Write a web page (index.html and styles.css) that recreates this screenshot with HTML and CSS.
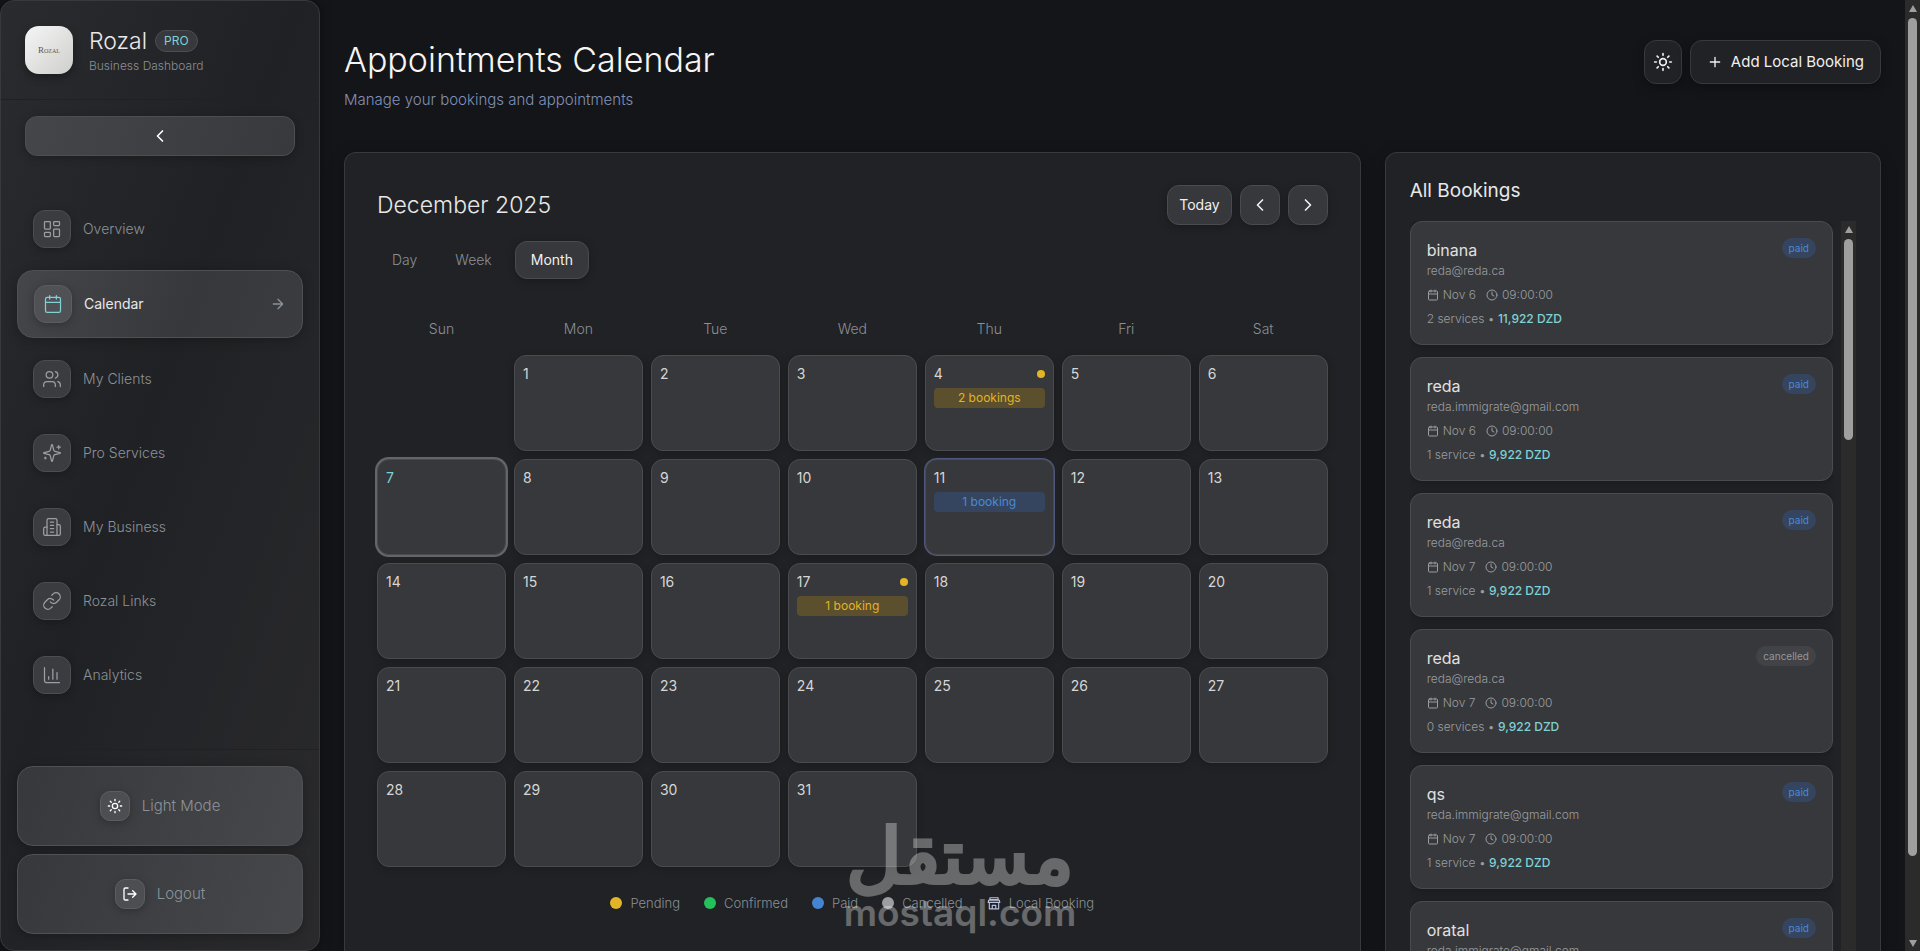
FILE: index.html
```html
<!DOCTYPE html>
<html lang="en">
<head>
  <meta charset="UTF-8">
  <title>Appointments Calendar - Rozal</title>
  <link rel="stylesheet" href="styles.css">
</head>
<body>
  <!-- Icons -->
  <svg class="sprite" aria-hidden="true">
    <symbol id="i-dashboard" viewBox="0 0 24 24"><rect x="3" y="3" width="7" height="9" rx="1"/><rect x="14" y="3" width="7" height="5" rx="1"/><rect x="14" y="12" width="7" height="9" rx="1"/><rect x="3" y="16" width="7" height="5" rx="1"/></symbol>
    <symbol id="i-calendar" viewBox="0 0 24 24"><path d="M8 2v4M16 2v4M3 10h18"/><rect x="3" y="4" width="18" height="18" rx="2"/></symbol>
    <symbol id="i-users" viewBox="0 0 24 24"><path d="M16 21v-2a4 4 0 0 0-4-4H6a4 4 0 0 0-4 4v2"/><circle cx="9" cy="7" r="4"/><path d="M22 21v-2a4 4 0 0 0-3-3.87M16 3.13a4 4 0 0 1 0 7.75"/></symbol>
    <symbol id="i-sparkles" viewBox="0 0 24 24"><path d="M9.94 15.5A2 2 0 0 0 8.5 14.06l-6.14-1.58a.5.5 0 0 1 0-.96L8.5 9.94A2 2 0 0 0 9.94 8.5l1.58-6.14a.5.5 0 0 1 .96 0l1.58 6.14a2 2 0 0 0 1.44 1.44l6.14 1.58a.5.5 0 0 1 0 .96l-6.14 1.58a2 2 0 0 0-1.44 1.44l-1.58 6.14a.5.5 0 0 1-.96 0z"/><path d="M20 3v4M22 5h-4M4 17v2M5 18H3"/></symbol>
    <symbol id="i-building" viewBox="0 0 24 24"><path d="M6 22V4a2 2 0 0 1 2-2h8a2 2 0 0 1 2 2v18Z"/><path d="M6 12H4a2 2 0 0 0-2 2v6a2 2 0 0 0 2 2h2M18 9h2a2 2 0 0 1 2 2v9a2 2 0 0 1-2 2h-2M10 6h4M10 10h4M10 14h4M10 18h4"/></symbol>
    <symbol id="i-link" viewBox="0 0 24 24"><path d="M10 13a5 5 0 0 0 7.54.54l3-3a5 5 0 0 0-7.07-7.07l-1.72 1.71"/><path d="M14 11a5 5 0 0 0-7.54-.54l-3 3a5 5 0 0 0 7.07 7.07l1.71-1.71"/></symbol>
    <symbol id="i-chart" viewBox="0 0 24 24"><path d="M3 3v16a2 2 0 0 0 2 2h16M18 17V9M13 17V5M8 17v-3"/></symbol>
    <symbol id="i-sun" viewBox="0 0 24 24"><circle cx="12" cy="12" r="4"/><path d="M12 2v2M12 20v2M4.93 4.93l1.41 1.41M17.66 17.66l1.41 1.41M2 12h2M20 12h2M6.34 17.66l-1.41 1.41M19.07 4.93l-1.41 1.41"/></symbol>
    <symbol id="i-logout" viewBox="0 0 24 24"><path d="M9 21H5a2 2 0 0 1-2-2V5a2 2 0 0 1 2-2h4M16 17l5-5-5-5M21 12H9"/></symbol>
    <symbol id="i-left" viewBox="0 0 24 24"><path d="m15 18-6-6 6-6"/></symbol>
    <symbol id="i-right" viewBox="0 0 24 24"><path d="m9 18 6-6-6-6"/></symbol>
    <symbol id="i-arrow" viewBox="0 0 24 24"><path d="M5 12h14M12 5l7 7-7 7"/></symbol>
    <symbol id="i-plus" viewBox="0 0 24 24"><path d="M5 12h14M12 5v14"/></symbol>
    <symbol id="i-clock" viewBox="0 0 24 24"><circle cx="12" cy="12" r="10"/><path d="M12 6v6l4 2"/></symbol>
    <symbol id="i-store" viewBox="0 0 24 24"><path d="M5 3h14v3H5z"/><path d="M3 7h18l1 4H2zM4 12v10h16V12M9 22v-6h6v6"/></symbol>
  </svg>

  <div class="app">
    <aside class="sidebar">
      <div class="brand">
        <div class="brand-logo">Rozal</div>
        <div>
          <div class="brand-name">Rozal <span class="pro">PRO</span></div>
          <div class="brand-sub">Business Dashboard</div>
        </div>
      </div>
      <div class="collapse">
        <button type="button" class="collapse-btn" aria-label="Collapse sidebar"><svg class="icon icon-lg"><use href="#i-left"/></svg></button>
      </div>
      <nav class="nav">
        <a href="#" class="nav-item"><span class="nav-icon"><svg class="icon"><use href="#i-dashboard"/></svg></span>Overview</a>
        <a href="#" class="nav-item active"><span class="nav-icon"><svg class="icon"><use href="#i-calendar"/></svg></span>Calendar<svg class="icon nav-arrow"><use href="#i-arrow"/></svg></a>
        <a href="#" class="nav-item"><span class="nav-icon"><svg class="icon"><use href="#i-users"/></svg></span>My Clients</a>
        <a href="#" class="nav-item"><span class="nav-icon"><svg class="icon"><use href="#i-sparkles"/></svg></span>Pro Services</a>
        <a href="#" class="nav-item"><span class="nav-icon"><svg class="icon"><use href="#i-building"/></svg></span>My Business</a>
        <a href="#" class="nav-item"><span class="nav-icon"><svg class="icon"><use href="#i-link"/></svg></span>Rozal Links</a>
        <a href="#" class="nav-item"><span class="nav-icon"><svg class="icon"><use href="#i-chart"/></svg></span>Analytics</a>
      </nav>
      <div class="sidebar-footer">
        <button type="button" class="footer-btn"><span class="footer-icon"><svg class="icon"><use href="#i-sun"/></svg></span>Light Mode</button>
        <button type="button" class="footer-btn"><span class="footer-icon"><svg class="icon"><use href="#i-logout"/></svg></span>Logout</button>
      </div>
    </aside>

    <main class="main">
      <header class="page-header">
        <div>
          <h1>Appointments Calendar</h1>
          <p class="subtitle">Manage your bookings and appointments</p>
        </div>
        <div class="header-actions">
          <button type="button" class="header-btn theme-btn" aria-label="Toggle theme"><svg class="icon icon-lg"><use href="#i-sun"/></svg></button>
          <button type="button" class="header-btn"><svg class="icon"><use href="#i-plus"/></svg>Add Local Booking</button>
        </div>
      </header>

      <div class="content">
        <section class="card calendar">
          <div class="calendar-top">
            <h2>December 2025</h2>
            <div class="calendar-nav">
              <button type="button" class="btn">Today</button>
              <button type="button" class="btn btn-square" aria-label="Previous month"><svg class="icon icon-lg"><use href="#i-left"/></svg></button>
              <button type="button" class="btn btn-square" aria-label="Next month"><svg class="icon icon-lg"><use href="#i-right"/></svg></button>
            </div>
          </div>
          <div class="tabs">
            <button type="button" class="tab">Day</button>
            <button type="button" class="tab">Week</button>
            <button type="button" class="tab active">Month</button>
          </div>
          <div class="month">
            <div class="weekday">Sun</div>
            <div class="weekday">Mon</div>
            <div class="weekday">Tue</div>
            <div class="weekday">Wed</div>
            <div class="weekday">Thu</div>
            <div class="weekday">Fri</div>
            <div class="weekday">Sat</div>
            <div></div>
            <div class="day">1</div>
            <div class="day">2</div>
            <div class="day">3</div>
            <div class="day"><div class="day-top">4<span class="dot dot-sm pending"></span></div><div class="tag tag-pending">2 bookings</div></div>
            <div class="day">5</div>
            <div class="day">6</div>
            <div class="day today">7</div>
            <div class="day">8</div>
            <div class="day">9</div>
            <div class="day">10</div>
            <div class="day local"><div class="day-top">11</div><div class="tag tag-paid">1 booking</div></div>
            <div class="day">12</div>
            <div class="day">13</div>
            <div class="day">14</div>
            <div class="day">15</div>
            <div class="day">16</div>
            <div class="day"><div class="day-top">17<span class="dot dot-sm pending"></span></div><div class="tag tag-pending">1 booking</div></div>
            <div class="day">18</div>
            <div class="day">19</div>
            <div class="day">20</div>
            <div class="day">21</div>
            <div class="day">22</div>
            <div class="day">23</div>
            <div class="day">24</div>
            <div class="day">25</div>
            <div class="day">26</div>
            <div class="day">27</div>
            <div class="day">28</div>
            <div class="day">29</div>
            <div class="day">30</div>
            <div class="day">31</div>
          </div>
          <div class="legend">
            <span class="legend-item"><span class="dot pending"></span>Pending</span>
            <span class="legend-item"><span class="dot confirmed"></span>Confirmed</span>
            <span class="legend-item"><span class="dot paid"></span>Paid</span>
            <span class="legend-item"><span class="dot cancelled"></span>Cancelled</span>
            <span class="legend-item"><svg class="icon icon-store"><use href="#i-store"/></svg>Local Booking</span>
          </div>
        </section>

        <section class="card bookings">
          <h3>All Bookings</h3>
          <div class="bookings-scroll">
            <div class="bookings-list">
              <article class="booking">
                <div class="booking-top"><span class="booking-name">binana</span><span class="badge">paid</span></div>
                <div class="booking-line">reda@reda.ca</div>
                <div class="booking-line booking-when"><svg class="icon icon-sm"><use href="#i-calendar"/></svg>Nov 6<svg class="icon icon-sm clock"><use href="#i-clock"/></svg>09:00:00</div>
                <div class="booking-line">2 services • <b>11,922 DZD</b></div>
              </article>
              <article class="booking">
                <div class="booking-top"><span class="booking-name">reda</span><span class="badge">paid</span></div>
                <div class="booking-line">reda.immigrate@gmail.com</div>
                <div class="booking-line booking-when"><svg class="icon icon-sm"><use href="#i-calendar"/></svg>Nov 6<svg class="icon icon-sm clock"><use href="#i-clock"/></svg>09:00:00</div>
                <div class="booking-line">1 service • <b>9,922 DZD</b></div>
              </article>
              <article class="booking">
                <div class="booking-top"><span class="booking-name">reda</span><span class="badge">paid</span></div>
                <div class="booking-line">reda@reda.ca</div>
                <div class="booking-line booking-when"><svg class="icon icon-sm"><use href="#i-calendar"/></svg>Nov 7<svg class="icon icon-sm clock"><use href="#i-clock"/></svg>09:00:00</div>
                <div class="booking-line">1 service • <b>9,922 DZD</b></div>
              </article>
              <article class="booking">
                <div class="booking-top"><span class="booking-name">reda</span><span class="badge badge-cancelled">cancelled</span></div>
                <div class="booking-line">reda@reda.ca</div>
                <div class="booking-line booking-when"><svg class="icon icon-sm"><use href="#i-calendar"/></svg>Nov 7<svg class="icon icon-sm clock"><use href="#i-clock"/></svg>09:00:00</div>
                <div class="booking-line">0 services • <b>9,922 DZD</b></div>
              </article>
              <article class="booking">
                <div class="booking-top"><span class="booking-name">qs</span><span class="badge">paid</span></div>
                <div class="booking-line">reda.immigrate@gmail.com</div>
                <div class="booking-line booking-when"><svg class="icon icon-sm"><use href="#i-calendar"/></svg>Nov 7<svg class="icon icon-sm clock"><use href="#i-clock"/></svg>09:00:00</div>
                <div class="booking-line">1 service • <b>9,922 DZD</b></div>
              </article>
              <article class="booking">
                <div class="booking-top"><span class="booking-name">oratal</span><span class="badge">paid</span></div>
                <div class="booking-line">reda.immigrate@gmail.com</div>
              </article>
            </div>
            <div class="scrollbar"><span class="arrow-up"></span><span class="thumb thumb-list"></span></div>
          </div>
        </section>
      </div>
    </main>

    <div class="scrollbar"><span class="arrow-up"></span><span class="thumb thumb-page"></span><span class="arrow-down"></span></div>
  </div>

  <div class="watermark">
    <span class="watermark-ar" lang="ar" dir="rtl">مستقل</span>
    <span class="watermark-en">mostaql.com</span>
  </div>
</body>
</html>
```
FILE: styles.css
```css
* {
  box-sizing: border-box;
}
body {
  margin: 0;
  background-color: #141519;
  color: #e8e8e8;
  font-family: Inter, "Liberation Sans", sans-serif;
  font-size: 14px;
  line-height: 20px;
  font-weight: 300;
  overflow: hidden;
}
h1, h2, h3, p {
  margin: 0;
}
button {
  font: inherit;
  color: inherit;
  cursor: pointer;
}
.sprite {
  display: none;
}
.icon {
  width: 16px;
  height: 16px;
  flex-shrink: 0;
  fill: none;
  stroke: currentColor;
  stroke-width: 2;
  stroke-linecap: round;
  stroke-linejoin: round;
}
.icon-lg {
  width: 20px;
  height: 20px;
}
.icon-sm {
  width: 12px;
  height: 12px;
}
.app {
  display: flex;
  height: 100vh;
}

/* Sidebar */
.sidebar {
  width: 320px;
  flex-shrink: 0;
  display: flex;
  flex-direction: column;
  border: 1px solid #38393c;
  border-radius: 14px;
  background: linear-gradient(110deg, #2a2b2e 0%, #202124 45%, #242528 65%, #2a2a2c 100%);
  box-shadow: 0 0 12px rgba(0, 0, 0, 0.4);
}
.brand {
  display: flex;
  align-items: center;
  gap: 16px;
  padding: 24px;
  border-bottom: 1px solid #202124;
}
.brand-logo {
  width: 48px;
  height: 48px;
  display: flex;
  align-items: center;
  justify-content: center;
  border-radius: 14px;
  background: linear-gradient(135deg, #f4f5f5, #cfcfcd);
  color: #55585f;
  font-family: "Liberation Serif", serif;
  font-size: 9px;
  font-weight: 400;
  font-variant: small-caps;
  box-shadow: 0 4px 8px rgba(0, 0, 0, 0.3);
}
.brand-name {
  display: flex;
  align-items: center;
  gap: 8px;
  font-size: 23px;
  line-height: 32px;
}
.pro {
  padding: 2px 8px;
  border: 1px solid #4d4e51;
  border-radius: 11px;
  background-color: #38393c;
  color: #7fd1d6;
  font-size: 12px;
  line-height: 16px;
  font-weight: 400;
}
.brand-sub {
  color: #899096;
  font-size: 12px;
  line-height: 18px;
}
.collapse {
  padding: 16px 24px;
}
.collapse-btn {
  width: 100%;
  height: 40px;
  display: flex;
  align-items: center;
  justify-content: center;
  border: 1px solid #4d4e51;
  border-radius: 12px;
  background: linear-gradient(110deg, #45464a, #38393c);
  color: #fff;
  box-shadow: 0 2px 8px rgba(0, 0, 0, 0.25);
}
.nav {
  flex: 1;
  display: flex;
  flex-direction: column;
  gap: 8px;
  padding: 24px 16px;
}
.nav-item {
  display: flex;
  align-items: center;
  gap: 12px;
  padding: 14px 16px;
  border-radius: 16px;
  color: #8b9297;
  text-decoration: none;
}
.nav-item.active {
  border: 1px solid #4f5053;
  background: linear-gradient(110deg, #454649, #37383b 60%, #3b3c3f);
  color: #e8e8e8;
  font-weight: 400;
  box-shadow: 0 2px 12px rgba(0, 0, 0, 0.25);
}
.nav-icon {
  width: 38px;
  height: 38px;
  display: flex;
  align-items: center;
  justify-content: center;
  border: 1px solid #4c4d50;
  border-radius: 12px;
  background-color: #3b3c3f;
  color: #9b9fa3;
  box-shadow: 0 2px 8px rgba(0, 0, 0, 0.25);
}
.nav-icon .icon {
  width: 20px;
  height: 20px;
  stroke-width: 1.5;
}
.active .nav-icon {
  border-color: #5b5c5f;
  background-color: #505154;
  color: #7fd1d6;
}
.nav-arrow {
  margin-left: auto;
  color: #899299;
}
.sidebar-footer {
  display: flex;
  flex-direction: column;
  gap: 8px;
  padding: 16px;
  border-top: 1px solid #202124;
}
.footer-btn {
  height: 80px;
  display: flex;
  align-items: center;
  justify-content: center;
  gap: 12px;
  border: 1px solid #505154;
  border-radius: 16px;
  background: linear-gradient(110deg, #37383b, #47484b);
  color: #8b9297;
  font-size: 15px;
  box-shadow: 0 2px 10px rgba(0, 0, 0, 0.25);
}
.footer-icon {
  width: 30px;
  height: 30px;
  display: flex;
  align-items: center;
  justify-content: center;
  border: 1px solid #5c5d60;
  border-radius: 10px;
  background-color: #4d4e51;
  color: #fff;
  box-shadow: 0 2px 8px rgba(0, 0, 0, 0.25);
}

/* Main */
.main {
  flex: 1;
  min-width: 0;
  display: flex;
  flex-direction: column;
  padding: 40px 24px 0;
}
.page-header {
  display: flex;
  justify-content: space-between;
  align-items: flex-start;
  margin-bottom: 40px;
}
h1 {
  font-size: 34px;
  line-height: 40px;
  font-weight: 300;
  color: #f5f5f5;
}
.subtitle {
  margin-top: 8px;
  color: #8290b6;
  font-size: 15px;
  line-height: 24px;
}
.header-actions {
  display: flex;
  gap: 8px;
}
.header-btn {
  height: 44px;
  display: flex;
  align-items: center;
  gap: 8px;
  padding: 0 16px;
  border: 1px solid #38393c;
  border-radius: 12px;
  background-color: #212225;
  color: #f0f0f0;
  font-size: 15px;
  font-weight: 400;
  box-shadow: 0 4px 12px rgba(0, 0, 0, 0.3);
}
.theme-btn {
  padding: 0 8px;
}
.content {
  flex: 1;
  min-height: 0;
  display: grid;
  grid-template-columns: repeat(3, 1fr);
  grid-template-rows: minmax(0, 1fr);
  gap: 24px;
}
.card {
  border: 1px solid #38393c;
  border-bottom: none;
  border-radius: 12px 12px 0 0;
  background-color: #212225;
  box-shadow: 0 4px 16px rgba(0, 0, 0, 0.3);
}
.calendar {
  grid-column: span 2;
  padding: 32px;
}
.calendar-top {
  display: flex;
  justify-content: space-between;
  align-items: center;
  margin-bottom: 16px;
}
h2 {
  font-size: 23px;
  line-height: 32px;
  font-weight: 300;
}
.calendar-nav {
  display: flex;
  gap: 8px;
}
.btn {
  height: 40px;
  display: flex;
  align-items: center;
  justify-content: center;
  padding: 0 11px;
  border: 1px solid #4a4b4e;
  border-radius: 12px;
  background-color: #37383b;
  color: #f0f0f0;
  font-weight: 400;
  box-shadow: 0 2px 8px rgba(0, 0, 0, 0.25);
}
.btn-square {
  width: 40px;
  padding: 0;
}
.tabs {
  display: flex;
  align-items: center;
  gap: 8px;
  margin-bottom: 32px;
}
.tab {
  padding: 8px 15px;
  border: none;
  border-radius: 12px;
  background: none;
  color: #899096;
}
.tab.active {
  border: 1px solid #4a4b4e;
  background-color: #37383b;
  color: #f0f0f0;
  font-weight: 400;
  box-shadow: 0 2px 8px rgba(0, 0, 0, 0.25);
}
.month {
  display: grid;
  grid-template-columns: repeat(7, 1fr);
  gap: 8px;
}
.weekday {
  padding: 8px 0;
  color: #899096;
  text-align: center;
}
.day {
  height: 96px;
  padding: 8px;
  border: 1px solid #4a4b4e;
  border-radius: 12px;
  background-color: #37383b;
  color: #d6d6d6;
  font-weight: 400;
  box-shadow: 0 2px 8px rgba(0, 0, 0, 0.2);
}
.day.today {
  color: #7fd1d6;
  box-shadow: 0 0 0 2px #646569;
}
.day.local {
  box-shadow: 0 0 0 1px #4f587c;
}
.day-top {
  display: flex;
  justify-content: space-between;
  align-items: center;
  margin-bottom: 4px;
}
.tag {
  border-radius: 4px;
  font-size: 12px;
  text-align: center;
}
.tag-pending {
  background-color: #5b4f2e;
  color: #e2b422;
}
.tag-paid {
  background-color: #35455f;
  color: #4a8ad6;
}
.dot {
  width: 12px;
  height: 12px;
  border-radius: 50%;
}
.dot-sm {
  width: 8px;
  height: 8px;
}
.pending {
  background-color: #e2b526;
}
.confirmed {
  background-color: #24c05c;
}
.paid {
  background-color: #4485d2;
}
.cancelled {
  background-color: #9c9ea2;
}
.legend {
  display: flex;
  justify-content: center;
  gap: 24px;
  margin-top: 24px;
  color: #899096;
  font-size: 13px;
  line-height: 24px;
}
.legend-item {
  display: flex;
  align-items: center;
  gap: 8px;
}
.icon-store {
  width: 14px;
  height: 14px;
  color: #b9c0dc;
}

/* Bookings list */
.bookings {
  display: flex;
  flex-direction: column;
  padding: 24px 24px 0;
}
h3 {
  margin-bottom: 16px;
  font-size: 19px;
  line-height: 28px;
  font-weight: 400;
}
.bookings-scroll {
  flex: 1;
  min-height: 0;
  display: flex;
  gap: 8px;
}
.bookings-list {
  flex: 1;
  display: flex;
  flex-direction: column;
  gap: 12px;
  overflow: hidden;
}
.booking {
  flex-shrink: 0;
  padding: 16px;
  border: 1px solid #4a4b4e;
  border-radius: 12px;
  background-color: #37383b;
  box-shadow: 0 2px 8px rgba(0, 0, 0, 0.25);
}
.booking-top {
  display: flex;
  justify-content: space-between;
  align-items: flex-start;
}
.booking-name {
  color: #e0e0e0;
  font-size: 16px;
  line-height: 24px;
  font-weight: 400;
}
.badge {
  padding: 0 7px;
  border-radius: 10px;
  background-color: #35455f;
  color: #4a8ad6;
  font-size: 10px;
  line-height: 20px;
  font-weight: 400;
}
.badge-cancelled {
  background-color: #424346;
  color: #93979b;
}
.booking-line {
  color: #989da1;
  font-size: 12px;
  line-height: 18px;
}
.booking-line b {
  color: #7fd1d6;
  font-weight: 500;
}
.booking-when {
  display: flex;
  align-items: center;
  gap: 4px;
  margin: 6px 0;
}
.clock {
  margin-left: 6px;
}

/* Scrollbars */
.scrollbar {
  width: 15px;
  flex-shrink: 0;
  display: flex;
  flex-direction: column;
  align-items: center;
  padding: 5px 0 4px;
  background-color: #2b2b2c;
}
.arrow-up, .arrow-down {
  border: 4px solid transparent;
}
.arrow-up {
  margin-bottom: 6px;
  border-top: none;
  border-bottom: 7px solid #9f9f9f;
}
.arrow-down {
  margin-top: auto;
  border-bottom: none;
  border-top: 7px solid #9f9f9f;
}
.thumb {
  width: 9px;
  border-radius: 5px;
  background-color: #9f9f9f;
}
.thumb-page {
  height: 89%;
}
.thumb-list {
  height: 201px;
}

/* Watermark */
.watermark {
  position: absolute;
  left: 50%;
  bottom: 16px;
  transform: translateX(-50%);
  display: flex;
  flex-direction: column;
  align-items: center;
  color: #ffffff;
  opacity: 0.32;
  pointer-events: none;
}
.watermark-ar {
  font-family: "DejaVu Sans", sans-serif;
  font-size: 76px;
  line-height: 68px;
  font-weight: 400;
  -webkit-text-stroke: 4px #ffffff;
}
.watermark-en {
  font-size: 37px;
  line-height: 44px;
  font-weight: 600;
}
```
